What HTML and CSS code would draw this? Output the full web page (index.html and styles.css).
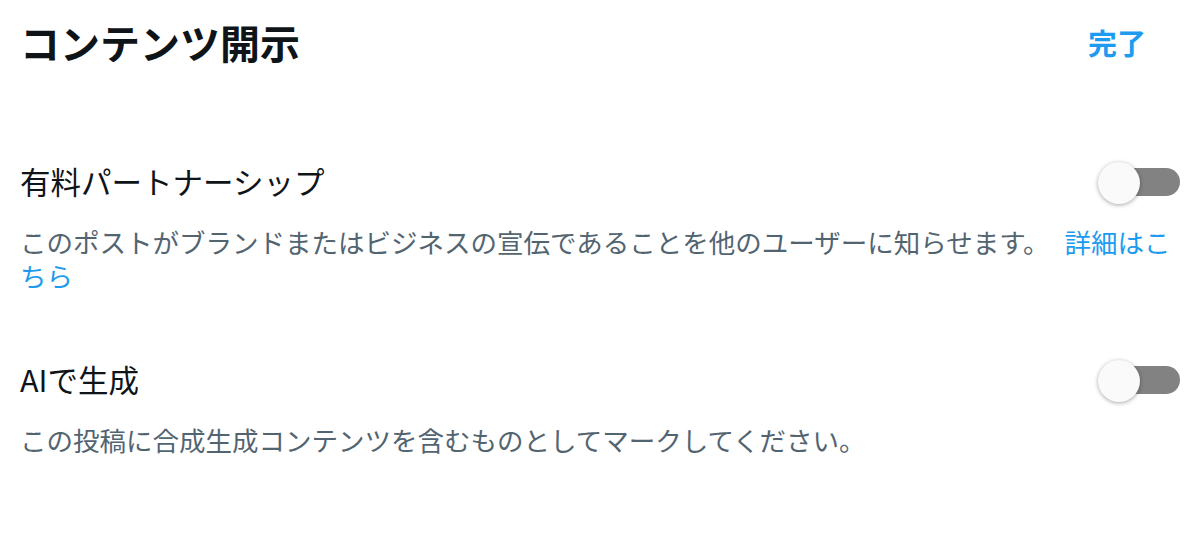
FILE: index.html
```html
<!DOCTYPE html>
<html lang="ja">
<head>
<meta charset="utf-8">
<title>コンテンツ開示</title>
<link rel="stylesheet" href="styles.css">
</head>
<body>
<div class="sheet">
  <header class="sheet-header">
    <h1 class="sheet-title">コンテンツ開示</h1>
    <button class="done-button" type="button">完了</button>
  </header>

  <section class="setting setting-first">
    <div class="setting-row">
      <span class="setting-label">有料パートナーシップ</span>
      <span class="switch" role="switch" aria-checked="false">
        <span class="switch-track"></span>
        <span class="switch-knob"></span>
      </span>
    </div>
    <p class="setting-desc">このポストがブランドまたはビジネスの宣伝であることを他のユーザーに知らせます。 <a class="setting-link" href="#">詳細はこちら</a></p>
  </section>

  <section class="setting setting-second">
    <div class="setting-row">
      <span class="setting-label">AIで生成</span>
      <span class="switch" role="switch" aria-checked="false">
        <span class="switch-track"></span>
        <span class="switch-knob"></span>
      </span>
    </div>
    <p class="setting-desc">この投稿に合成生成コンテンツを含むものとしてマークしてください。</p>
  </section>
</div>
</body>
</html>
```
FILE: styles.css
```css
html, body {
  margin: 0;
  padding: 0;
  background: #ffffff;
}

body {
  font-family: "Noto Sans CJK JP", "Noto Sans", sans-serif;
  color: #0f1419;
}

.sheet {
  padding: 0 20px;
}

.sheet-header {
  display: flex;
  align-items: center;
  justify-content: space-between;
  height: 84px;
}

.sheet-title {
  margin: 0;
  font-size: 40px;
  line-height: 40px;
  font-weight: 700;
  color: #0f1419;
}

.done-button {
  border: 0;
  background: none;
  padding: 0 34px 0 0;
  font-family: inherit;
  font-size: 29px;
  line-height: 30px;
  font-weight: 700;
  color: #1d9bf0;
  cursor: pointer;
}

.setting-first {
  padding-top: 72px;
}

.setting-second {
  padding-top: 61px;
}

.setting-row {
  display: flex;
  align-items: center;
  justify-content: space-between;
  height: 50px;
}

.setting-label {
  font-size: 30.5px;
  line-height: 40px;
  color: #0f1419;
}

.setting-desc {
  margin: 19px 0 0;
  font-size: 26.5px;
  line-height: 34px;
  color: #536471;
}

.setting-link {
  color: #1d9bf0;
  text-decoration: none;
  margin-left: 9px;
}

.switch {
  position: relative;
  display: block;
  width: 82px;
  height: 42px;
  margin-top: 4px;
  flex-shrink: 0;
}

.switch-track {
  position: absolute;
  right: 0;
  top: 6px;
  width: 68px;
  height: 28px;
  border-radius: 14px;
  background: #828282;
}

.switch-knob {
  position: absolute;
  left: 0;
  top: 0;
  width: 42px;
  height: 42px;
  border-radius: 50%;
  background: #fafafa;
  box-shadow: 0 1px 4px rgba(0, 0, 0, 0.35);
}
```
